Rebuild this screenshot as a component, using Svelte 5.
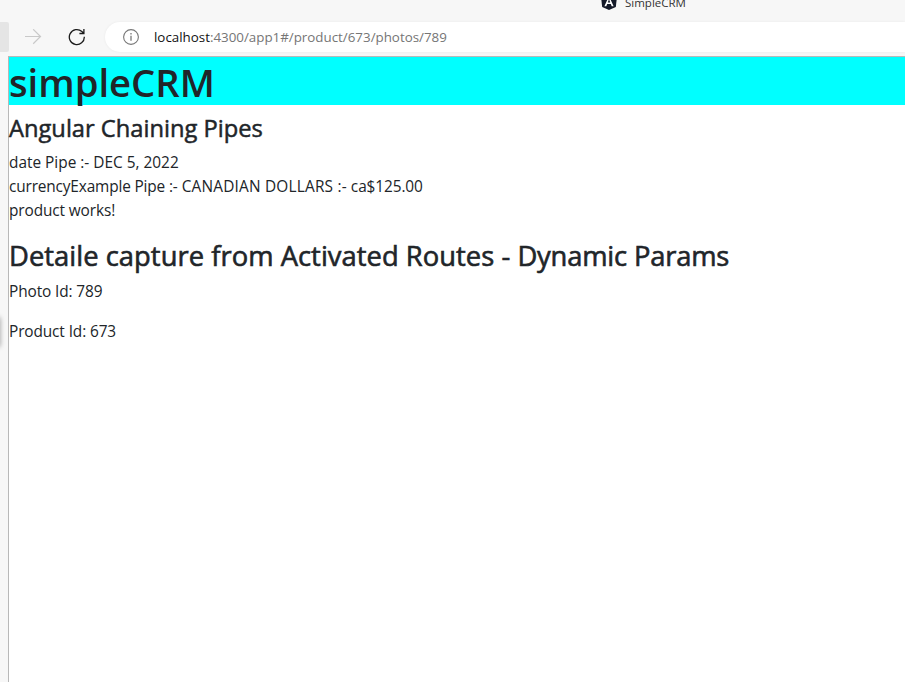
<script>
  const details = [
    { label: 'Photo Id', value: 789 },
    { label: 'Product Id', value: 673 }
  ];
</script>

<div class="browser">
  <div class="tabstrip">
    <svg class="logo" width="16" height="16" viewBox="0 0 16 16">
      <path d="M8 0 16 3 14.8 13 8 16 1.2 13 0 3Z" fill="#151a29" />
      <path d="M8 2 3.4 12.2h1.9l.9-2.3h3.6l.9 2.3h1.9ZM8 5.3l1.2 3.1H6.8Z" fill="#fff" fill-rule="evenodd" />
    </svg>
    <span class="tab-title">SimpleCRM</span>
  </div>
  <div class="toolbar">
    <div class="back"></div>
    <svg class="forward" width="18" height="16" viewBox="0 0 18 16" fill="none" stroke="#c9c9c9" stroke-width="1.2">
      <path d="M1 7.5h15.5M9.2 .3l7.3 7.2-7.3 7.2" />
    </svg>
    <svg class="reload" width="18" height="18" viewBox="0 0 18 18" fill="none" stroke="#1b1b1b" stroke-width="1.3">
      <path d="M16.3 8.8A7.5 7.5 0 1 1 13.9 3.6L15.6 5.2M15.9 1V5.5H11.4" />
    </svg>
    <div class="address">
      <svg width="16" height="16" viewBox="0 0 16 16" fill="none" stroke="#777" stroke-width="1.1">
        <circle cx="8" cy="8" r="7.4" />
        <path d="M8 6.7v5M8 4v1.4" stroke-width="1.3" />
      </svg>
      <span class="url"><b>localhost</b>:4300/app1#/product/673/photos/789</span>
    </div>
  </div>
  <div class="view">
    <div class="edge"><i></i></div>
    <main>
      <h1>simpleCRM</h1>
      <h4>Angular Chaining Pipes</h4>
      <div class="date">date Pipe :- DEC 5, 2022</div>
      <div><span class="pipe">currencyExample Pipe :-</span> <span class="name">CANADIAN DOLLARS :-</span> <span class="amount">ca$125.00</span></div>
      <p>product works!</p>
      <h3><span class="lead">Detaile capture from Activated Routes -</span> <span class="topic">Dynamic Params</span></h3>
      {#each details as item}
        <p>{item.label}: {item.value}</p>
      {/each}
    </main>
  </div>
</div>

<style>
  .browser {
    width: 100%;
    height: 682px;
    display: flex;
    flex-direction: column;
    overflow: hidden;
    background: #f7f7f7;
    font-family: "Open Sans", "Noto Sans", sans-serif;
    color: #212529;
    white-space: nowrap;
  }
  .tabstrip {
    height: 22px;
    display: flex;
    align-items: flex-start;
    padding-left: 601px;
    flex: none;
  }
  .logo { margin-top: -6px; }
  .tab-title {
    margin: -6px 0 0 8px;
    font-size: 11.5px;
    line-height: 18px;
    color: #333;
  }
  .toolbar {
    height: 30px;
    flex: none;
    display: flex;
    align-items: center;
  }
  .back {
    width: 9px;
    height: 30px;
    background: #e5e5e5;
    border-radius: 0 2px 2px 0;
  }
  .forward { margin-left: 15px; }
  .reload { margin-left: 26px; }
  .address {
    flex: 1;
    height: 30px;
    margin-left: 19px;
    padding-left: 18px;
    display: flex;
    align-items: center;
    background: #fff;
    border-radius: 15px 0 0 15px;
    box-shadow: 0 0 3px #0000000f;
  }
  .url {
    margin-left: 15px;
    font-size: 13.35px;
    color: #757575;
  }
  .url b { font-weight: 400; color: #111; }
  .view {
    flex: 1;
    display: flex;
    margin-top: 4px;
  }
  .edge { width: 8px; overflow: hidden; }
  .edge i {
    display: block;
    width: 4px;
    height: 30px;
    margin: 261px 0 0 -4px;
    border-radius: 3px;
    box-shadow: 0 0 5px #0006;
  }
  main {
    flex: 1;
    background: #fff;
    border-left: 1px solid #b8b8b8;
    border-top: 1px solid #b8b8b8;
    font-size: 15.4px;
    line-height: 24px;
  }
  h1, h3, h4 { margin: 0 0 8px; font-weight: 400; }
  h1 {
    height: 48px;
    background: #0ff;
    color: #212529;
    font-size: 38.2px;
    line-height: 50px;
    font-weight: 600;
  }
  h4 {
    padding-top: 1px;
    font-size: 23.7px;
    line-height: 29px;
    -webkit-text-stroke: 0.5px #212529;
  }
  h3 {
    font-size: 27.35px;
    line-height: 33px;
    -webkit-text-stroke: 0.6px #212529;
  }
  p { margin: 0 0 16px; letter-spacing: -0.11px; }
  .pipe { letter-spacing: -0.15px; }
  .name { letter-spacing: 0.2px; }
  .amount { letter-spacing: -0.1px; }
  .lead { letter-spacing: 0.04px; }
  .topic { letter-spacing: -0.18px; }
</style>
